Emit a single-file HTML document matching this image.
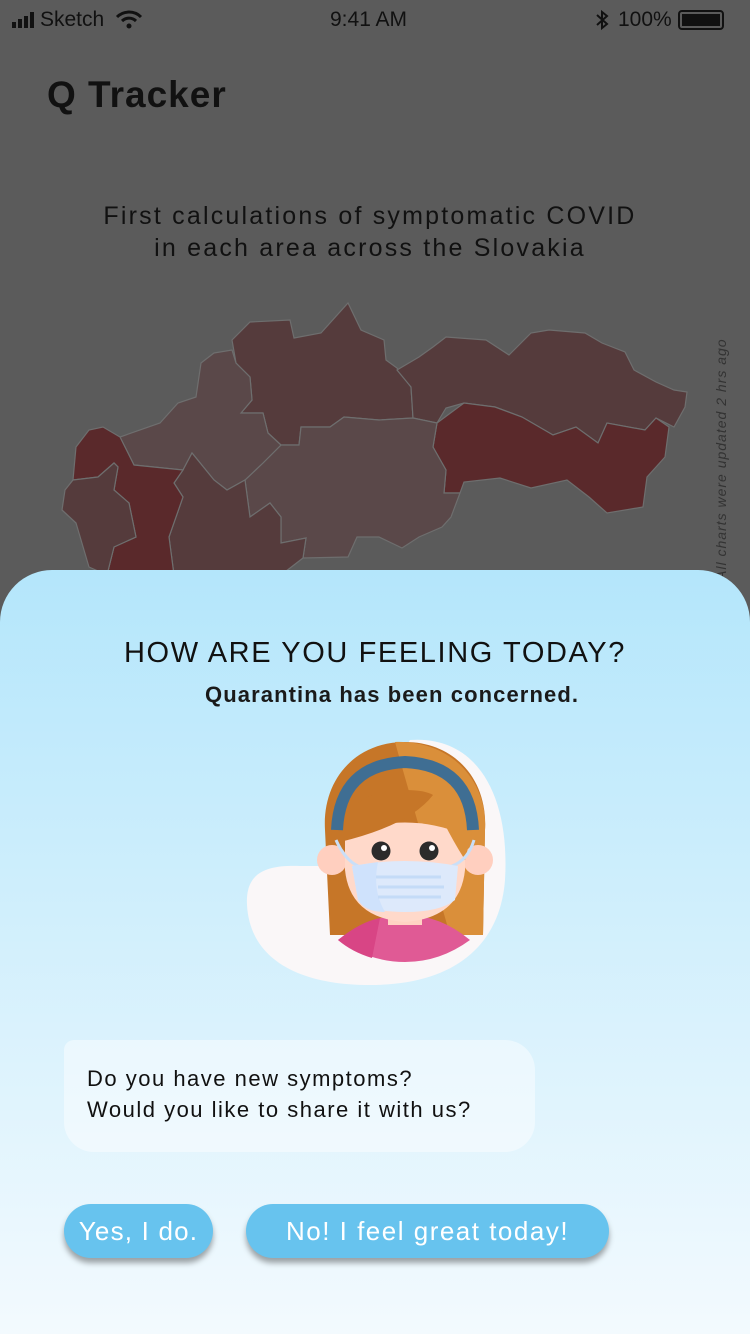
<!DOCTYPE html>
<html><head><meta charset="utf-8"><style>
*{margin:0;padding:0;box-sizing:border-box}
body{width:750px;height:1334px;overflow:hidden;background:#5b5b5b;font-family:"Liberation Sans",sans-serif;position:relative;color:#111}
.abs{position:absolute}
.sheet{position:absolute;left:0;top:570px;width:750px;height:764px;border-radius:52px 52px 0 0;background:linear-gradient(#b4e6fb,#f3fafe)}
.btn{position:absolute;top:1204px;height:54px;border-radius:27px;background:#67c3ee;color:#fff;font-size:26px;line-height:54px;text-align:center;box-shadow:0 5px 6px rgba(0,0,0,.35)}
</style></head><body>
<div class="abs" style="left:12px;top:8px;font-size:21px;display:flex;align-items:center">
<span style="display:inline-flex;align-items:flex-end;gap:2px;height:16px;margin-right:6px"><i style="width:4px;height:6px;background:#111"></i><i style="width:4px;height:9px;background:#111"></i><i style="width:4px;height:12px;background:#111"></i><i style="width:4px;height:16px;background:#111"></i></span>Sketch
<svg width="30" height="20" viewBox="0 0 30 20" style="margin-left:10px"><path d="M3 7a17 17 0 0 1 24 0" stroke="#111" stroke-width="3" fill="none"/><path d="M8 11a10 10 0 0 1 14 0" stroke="#111" stroke-width="3" fill="none"/><circle cx="15" cy="16" r="2.5" fill="#111"/></svg></div>
<div class="abs" style="left:330px;top:8px;font-size:21px">9:41 AM</div>
<div class="abs" style="left:594px;top:8px;font-size:21px;display:flex;align-items:center">
<svg width="16" height="22" viewBox="0 0 16 22"><path d="M3 6l10 9-5 4V3l5 4-10 9" stroke="#111" stroke-width="2" fill="none"/></svg>
<span style="margin-left:8px">100%</span>
<span style="margin-left:6px;width:46px;height:20px;border:2px solid #111;border-radius:4px;padding:2px;display:inline-block"><i style="display:block;width:100%;height:100%;background:#111"></i></span></div>
<div class="abs" style="left:47px;top:74px;font-size:37px;font-weight:bold;letter-spacing:1px">Q Tracker</div>
<div class="abs" style="left:0;width:740px;top:200px;font-size:25px;text-align:center;line-height:32px;letter-spacing:2.2px">First calculations of symptomatic COVID<br>in each area across the Slovakia</div>
<div class="abs" style="left:713px;top:580px;transform:rotate(-90deg);transform-origin:0 0;font-size:14px;font-style:italic;color:#333;white-space:nowrap;letter-spacing:1px">All charts were updated 2 hrs ago</div>
<svg class="abs" style="left:0;top:0" width="750" height="600" stroke="#6e6e6e" stroke-width="1.2">
<path fill="#553b3c" d="M232,340L250,322L290,320L294,338L321,333L348,303L361,330L384,340L386,360L397,368L411,387L413,418L379,420L344,417L330,427L301,427L299,445L281,445L268,433L263,413L241,413L252,400L250,377L236,363Z"/>
<path fill="#553b3c" d="M397,370L419,357L433,347L446,337L486,340L509,355L531,333L549,330L585,333L602,343L625,352L634,370L656,382L674,390L687,392L685,407L674,427L656,418L645,430L607,423L598,443L576,427L553,435L522,417L495,407L464,403L446,408L437,423L413,418L411,387Z"/>
<path fill="#5a292b" d="M437,423L464,403L495,407L522,417L553,435L576,427L598,443L607,423L645,430L656,418L669,427L665,457L647,477L643,507L607,513L589,497L567,480L531,488L500,478L464,482L460,493L444,493L446,470L433,447Z"/>
<path fill="#5a4849" d="M281,445L299,445L301,427L330,427L344,417L379,420L413,418L437,423L433,447L446,470L444,493L460,493L451,517L442,527L419,537L402,548L379,537L357,537L348,557L303,558L306,538L281,543L281,517L270,503L250,517L245,480L263,463Z"/>
<path fill="#5a4849" d="M232,350L236,363L250,377L252,400L241,413L263,413L268,433L281,445L263,463L245,480L227,490L214,480L192,453L183,470L134,465L120,437L160,423L178,403L196,397L201,363L214,353Z"/>
<path fill="#553b3c" d="M183,470L192,453L214,480L227,490L245,480L250,517L270,503L281,517L281,543L306,538L303,558L281,575L174,575L169,537L183,497L174,483Z"/>
<path fill="#5a292b" d="M120,437L134,465L183,470L174,483L183,497L169,537L174,575L107,575L114,547L136,537L129,503L114,490L118,467L114,463L98,477L73,480L76,447L89,430L103,427Z"/>
<path fill="#553b3c" d="M73,480L98,477L114,463L118,467L114,490L129,503L136,537L114,547L107,575L89,567L76,523L62,510L65,490Z"/>
</svg>
<div class="sheet"></div>
<div class="abs" style="left:0;width:750px;top:637px;font-size:29px;text-align:center;letter-spacing:1.6px">HOW ARE YOU FEELING TODAY?</div>
<div class="abs" style="left:205px;top:682px;font-size:22px;font-weight:bold;color:#1a1a1a;letter-spacing:1.1px">Quarantina has been concerned.</div>
<svg class="abs" style="left:0;top:0" width="750" height="1000" viewBox="0 0 750 1000">
<path fill="#faf7f8" d="M410,740C480,735 510,800 505,880C500,945 455,985 370,985C300,985 250,960 247,905C245,870 270,865 300,866L330,866Z"/>
<path fill="#c67628" d="M325,830C322,780 355,742 405,742C455,742 488,780 485,830L483,935L330,935Z"/>
<path fill="#da8f3a" d="M395,742C450,740 488,780 485,830L483,935L450,935L400,760Z"/>
<path fill="#e05a95" d="M338,940Q370,915 405,915Q440,915 470,940Q440,962 405,962Q370,962 338,940Z"/>
<path fill="#d84585" d="M338,940Q360,922 380,918L372,958Q352,952 338,940Z"/>
<rect x="388" y="895" width="34" height="30" fill="#ffd3c3"/>
<circle cx="332" cy="860" r="15" fill="#ffcfbf"/><circle cx="478" cy="860" r="15" fill="#ffcfbf"/>
<path fill="#ffd9ca" d="M345,835Q405,810 465,835L465,870Q460,918 405,922Q350,918 345,870Z"/>
<path fill="#c67628" d="M340,840Q345,790 405,790Q425,790 433,795Q410,825 340,842Z"/>
<path fill="#da8f3a" d="M433,795Q465,810 470,840L465,860Q440,820 433,795Z"/>
<path d="M337,830Q340,765 405,762Q470,765 473,830" stroke="#3f6e93" stroke-width="12" fill="none"/>
<circle cx="381" cy="851" r="9.5" fill="#2b2b2b"/><circle cx="384" cy="848" r="3" fill="#fff"/>
<circle cx="429" cy="851" r="9.5" fill="#2b2b2b"/><circle cx="432" cy="848" r="3" fill="#fff"/>
<path d="M336,840Q345,860 358,866M474,840Q468,860 452,866" stroke="#c9dff8" stroke-width="3" fill="none"/>
<path fill="#dde9fb" d="M352,866Q405,856 458,866L455,900Q440,912 405,912Q370,912 358,900Z"/>
<path fill="#cfe2fc" d="M352,866L378,862Q372,890 385,912Q365,912 358,900Z"/>
<path d="M376,877H441M378,887H444M378,897H441" stroke="#c4dbf7" stroke-width="3"/>
</svg>
<div class="abs" style="left:64px;top:1040px;width:471px;height:112px;background:rgba(255,255,255,.45);border-radius:10px 30px 30px 30px"></div>
<div class="abs" style="left:87px;top:1063px;font-size:22px;line-height:31px;color:#111;letter-spacing:1.5px">Do you have new symptoms?<br>Would you like to share it with us?</div>
<div class="btn" style="left:64px;width:149px;letter-spacing:1.2px">Yes, I do.</div>
<div class="btn" style="left:246px;width:363px;letter-spacing:1.5px">No! I feel great today!</div>
</body></html>
